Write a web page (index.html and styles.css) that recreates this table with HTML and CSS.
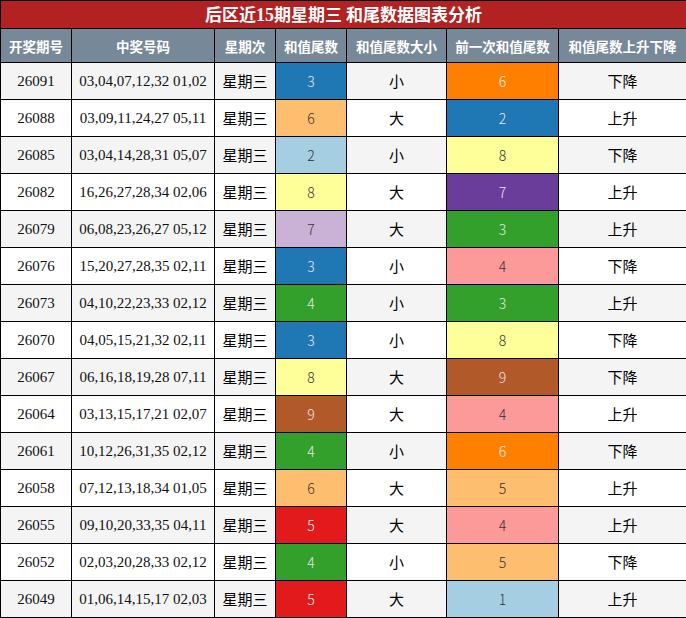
FILE: index.html
```html
<!DOCTYPE html>
<html lang="zh">
<head>
<meta charset="utf-8">
<link rel="stylesheet" href="styles.css">
</head>
<body>
<table class="chart">
<colgroup>
<col class="c1"><col class="c2"><col class="c3"><col class="c4"><col class="c5"><col class="c6"><col class="c7">
</colgroup>
<thead>
<tr class="title-row"><th colspan="7">后区近<span class="num">15</span>期星期三 和尾数据图表分析</th></tr>
<tr class="head-row"><th>开奖期号</th><th>中奖号码</th><th>星期次</th><th>和值尾数</th><th>和值尾数大小</th><th>前一次和值尾数</th><th>和值尾数上升下降</th></tr>
</thead>
<tbody>
<tr class="odd"><td class="num">26091</td><td class="num">03,04,07,12,32 01,02</td><td>星期三</td><td class="v c-blue">3</td><td>小</td><td class="v c-orange">6</td><td>下降</td></tr>
<tr><td class="num">26088</td><td class="num">03,09,11,24,27 05,11</td><td>星期三</td><td class="v c-lorange">6</td><td>大</td><td class="v c-blue">2</td><td>上升</td></tr>
<tr class="odd"><td class="num">26085</td><td class="num">03,04,14,28,31 05,07</td><td>星期三</td><td class="v c-lblue">2</td><td>小</td><td class="v c-yellow">8</td><td>下降</td></tr>
<tr><td class="num">26082</td><td class="num">16,26,27,28,34 02,06</td><td>星期三</td><td class="v c-yellow">8</td><td>大</td><td class="v c-purple">7</td><td>上升</td></tr>
<tr class="odd"><td class="num">26079</td><td class="num">06,08,23,26,27 05,12</td><td>星期三</td><td class="v c-lpurple">7</td><td>大</td><td class="v c-green">3</td><td>上升</td></tr>
<tr><td class="num">26076</td><td class="num">15,20,27,28,35 02,11</td><td>星期三</td><td class="v c-blue">3</td><td>小</td><td class="v c-pink">4</td><td>下降</td></tr>
<tr class="odd"><td class="num">26073</td><td class="num">04,10,22,23,33 02,12</td><td>星期三</td><td class="v c-green">4</td><td>小</td><td class="v c-green">3</td><td>上升</td></tr>
<tr><td class="num">26070</td><td class="num">04,05,15,21,32 02,11</td><td>星期三</td><td class="v c-blue">3</td><td>小</td><td class="v c-yellow">8</td><td>下降</td></tr>
<tr class="odd"><td class="num">26067</td><td class="num">06,16,18,19,28 07,11</td><td>星期三</td><td class="v c-yellow">8</td><td>大</td><td class="v c-brown">9</td><td>下降</td></tr>
<tr><td class="num">26064</td><td class="num">03,13,15,17,21 02,07</td><td>星期三</td><td class="v c-brown">9</td><td>大</td><td class="v c-pink">4</td><td>上升</td></tr>
<tr class="odd"><td class="num">26061</td><td class="num">10,12,26,31,35 02,12</td><td>星期三</td><td class="v c-green">4</td><td>小</td><td class="v c-orange">6</td><td>下降</td></tr>
<tr><td class="num">26058</td><td class="num">07,12,13,18,34 01,05</td><td>星期三</td><td class="v c-lorange">6</td><td>大</td><td class="v c-lorange">5</td><td>上升</td></tr>
<tr class="odd"><td class="num">26055</td><td class="num">09,10,20,33,35 04,11</td><td>星期三</td><td class="v c-red">5</td><td>大</td><td class="v c-pink">4</td><td>上升</td></tr>
<tr><td class="num">26052</td><td class="num">02,03,20,28,33 02,12</td><td>星期三</td><td class="v c-green">4</td><td>小</td><td class="v c-lorange">5</td><td>下降</td></tr>
<tr class="odd"><td class="num">26049</td><td class="num">01,06,14,15,17 02,03</td><td>星期三</td><td class="v c-red">5</td><td>大</td><td class="v c-lblue">1</td><td>上升</td></tr>
</tbody>
</table>
</body>
</html>
```
FILE: styles.css
```css
html, body {
  margin: 0;
  padding: 0;
  background: #ffffff;
}
.chart {
  width: 686px;
  border-collapse: collapse;
  table-layout: fixed;
  font-family: "Noto Sans CJK SC", sans-serif;
  color: #000;
}
.c1 { width: 71px; }
.c2 { width: 143px; }
.c3 { width: 61px; }
.c4 { width: 71px; }
.c5 { width: 100px; }
.c6 { width: 112px; }
.c7 { width: 128px; }
.chart th, .chart td {
  border: 1px solid #000;
  padding: 0;
  text-align: center;
  vertical-align: middle;
  overflow: hidden;
  white-space: nowrap;
  line-height: 20px;
}
.title-row th {
  height: 27px;
  background: #b22222;
  color: #fff;
  font-size: 17px;
  font-weight: bold;
  line-height: 24px;
}
.title-row .num {
  font-family: "Liberation Serif", serif;
  font-size: 18px;
}
.head-row th {
  height: 33px;
  background: #778899;
  color: #fff;
  font-size: 13.5px;
  font-weight: bold;
}
.chart td {
  height: 36px;
  font-size: 15px;
  background: #fff;
}
.chart tr.odd td {
  background: #f4f4f4;
}
.chart td.num {
  font-family: "Liberation Serif", serif;
  font-size: 15px;
  color: #111;
}
.chart td.v {
  font-family: "Noto Sans CJK SC", sans-serif;
  font-size: 14px;
  font-weight: 300;
  line-height: 16px;
  color: #333;
}
.chart tr td.c-blue { background: #1f78b4; color: #e8e8e8; }
.chart tr td.c-lblue { background: #a6cee3; }
.chart tr td.c-orange { background: #ff7f00; color: #eee; }
.chart tr td.c-lorange { background: #fdbf6f; }
.chart tr td.c-yellow { background: #ffff99; }
.chart tr td.c-purple { background: #6a3d9a; color: #e8e8e8; }
.chart tr td.c-lpurple { background: #cab2d6; }
.chart tr td.c-green { background: #33a02c; color: #e8e8e8; }
.chart tr td.c-pink { background: #fb9a99; }
.chart tr td.c-brown { background: #b15928; color: #e8e8e8; }
.chart tr td.c-red { background: #e31a1c; color: #eee; }
```
